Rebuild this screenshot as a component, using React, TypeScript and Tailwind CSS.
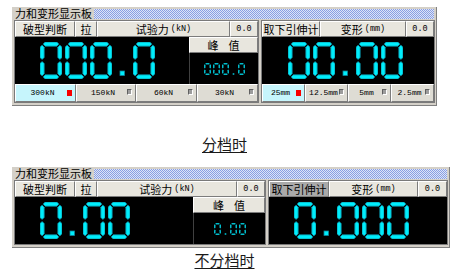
import React from 'react';

const SEG: Record<string, string> = {
  '0': 'abcdef',
  '1': 'bc',
  '2': 'abged',
  '3': 'abgcd',
  '4': 'fgbc',
  '5': 'afgcd',
  '6': 'afgedc',
  '7': 'abc',
  '8': 'abcdefg',
  '9': 'abcdfg',
};

type DigitProps = { ch: string; w: number; h: number; t: number; fill: string; edge?: string };

// one seven-segment cell, drawn with hexagon segments
function Digit({ ch, w, h, t, fill, edge }: DigitProps) {
  const k = t / 2;
  const g = t > 2 ? 1 : 0.5;
  const L = k;
  const R = w - k;
  const T = k;
  const M = h / 2;
  const B = h - k;
  const hz = (y: number) =>
    `${L + g},${y} ${L + g + k},${y - k} ${R - g - k},${y - k} ${R - g},${y} ${R - g - k},${y + k} ${L + g + k},${y + k}`;
  const vt = (x: number, y1: number, y2: number) =>
    `${x},${y1} ${x + k},${y1 + k} ${x + k},${y2 - k} ${x},${y2} ${x - k},${y2 - k} ${x - k},${y1 + k}`;
  const pts: Record<string, string> = {
    a: hz(T),
    g: hz(M),
    d: hz(B),
    f: vt(L, T + g, M - g),
    b: vt(R, T + g, M - g),
    e: vt(L, M + g, B - g),
    c: vt(R, M + g, B - g),
  };
  return (
    <svg width={w} height={h} viewBox={`0 0 ${w} ${h}`}>
      {(SEG[ch] || '').split('').map((s) => (
        <polygon key={s} points={pts[s]} fill={fill} stroke={edge || 'none'} strokeWidth={0.8} />
      ))}
    </svg>
  );
}

function BigReadout({ value }: { value: string }) {
  return (
    <div className="flex gap-[3px]">
      {value.split('').map((c, i) =>
        c === '.' ? (
          <svg key={i} width={15} height={37}>
            <rect x={5} y={29} width={4.5} height={4.5} fill="#00eefc" stroke="#0a8398" strokeWidth={0.8} />
          </svg>
        ) : (
          <Digit key={i} ch={c} w={22} h={37} t={4.2} fill="#00eefc" edge="#0a8398" />
        ),
      )}
    </div>
  );
}

function SmallReadout({ value }: { value: string }) {
  return (
    <div className="flex gap-[2px]">
      {value.split('').map((c, i) =>
        c === '.' ? (
          <svg key={i} width={5} height={12}>
            <rect x={1.7} y={10.2} width={1.6} height={1.6} fill="#00bccc" />
          </svg>
        ) : (
          <Digit key={i} ch={c} w={7} h={12} t={1.5} fill="#00bccc" />
        ),
      )}
    </div>
  );
}

const cjk = "font-['Noto_Sans_CJK_SC','Noto_Sans',sans-serif]";
const mono = "font-['Liberation_Mono',monospace]";
const raised = 'border-t border-l border-t-white border-l-white border-r border-b border-r-[#7c7c7c] border-b-[#7c7c7c]';

function HeadBtn({ className, children }: { className: string; children: React.ReactNode }) {
  return (
    <div className={`flex h-[16px] items-center justify-center text-black ${raised} ${className}`}>{children}</div>
  );
}

function Unit({ cn, unit }: { cn: string; unit: string }) {
  return (
    <>
      <span className={`${cjk} text-[11px] leading-[14px]`}>{cn}</span>
      <span className={`${mono} ml-[2px] text-[8.5px] leading-[14px]`}>{unit}</span>
    </>
  );
}

function Zero({ className }: { className: string }) {
  return (
    <HeadBtn className={`bg-[#e8e6de] ${className}`}>
      <span className={`${mono} text-[8.5px] leading-[14px]`}>0.0</span>
    </HeadBtn>
  );
}

function RangeBtn({ label, active, className }: { label: string; active?: boolean; className: string }) {
  return (
    <div
      className={`flex h-[18px] items-center ${raised} ${active ? 'bg-[#c6f5fc]' : 'bg-[#dedcd4]'} ${className}`}
    >
      <span className={`${mono} flex-1 pl-[2px] text-center text-[8px] leading-[10px] text-black`}>{label}</span>
      {active ? (
        <span className="mr-[3px] h-[6px] w-[5px] bg-[#f80000]" />
      ) : (
        <span className="mr-[3px] mb-[3px] h-[6px] w-[5px] border border-t-[#606060] border-l-[#606060] border-r-white border-b-white bg-[#9c9c9c]" />
      )}
    </div>
  );
}

function TitleBar() {
  return (
    <div className="flex h-[13px] items-center">
      <span className={`${cjk} pl-[1px] text-[11px] leading-[13px] text-black`}>力和变形显示板</span>
      <div className="ml-[2px] mr-[1px] h-[10px] flex-1 bg-[#b8c4f0] bg-[conic-gradient(#8a9fe2_25%,#dde4f8_0_50%,#8a9fe2_0_75%,#dde4f8_0)] bg-[length:2px_2px]" />
    </div>
  );
}

function PeakHead({ className }: { className: string }) {
  return (
    <HeadBtn className={`bg-[#e8e6de] ${className}`}>
      <span className={`${cjk} flex gap-[10px] text-[11px] leading-[14px]`}>
        <span>峰</span>
        <span>值</span>
      </span>
    </HeadBtn>
  );
}

function Caption({ text, className }: { text: string; className: string }) {
  return (
    <div className={`${cjk} w-[425px] text-center text-[15px] leading-[17px] text-[#1a1a1a] ${className}`}>
      <span className="underline underline-offset-[2px]">{text}</span>
    </div>
  );
}

function RangedPanel() {
  return (
    <div className="w-[425px] border-r border-b border-[#808080] bg-[#d4d0c8] pl-[2px] pr-[1px] pb-[2px]">
      <TitleBar />
      <div className="flex gap-[2px]">
        <div className="w-[245px] border border-[#7a7a7a]">
          <div className="flex">
            <HeadBtn className={`${cjk} w-[60px] bg-[#e8e6de] text-[11px] leading-[14px]`}>破型判断</HeadBtn>
            <HeadBtn className={`${cjk} w-[22px] bg-[#e8e6de] text-[11px] leading-[14px]`}>拉</HeadBtn>
            <HeadBtn className="w-[133px] bg-[#e8e6de]">
              <Unit cn="试验力" unit="(kN)" />
            </HeadBtn>
            <Zero className="w-[28px]" />
          </div>
          <div className="flex h-[47px]">
            <div className="w-[174px] bg-black pl-[25px] pt-[5px]">
              <BigReadout value="000.0" />
            </div>
            <div className="flex w-[69px] flex-col">
              <PeakHead className="w-[69px]" />
              <div className="flex flex-1 items-center justify-center border-l border-[#404040] bg-black">
                <SmallReadout value="000.0" />
              </div>
            </div>
          </div>
          <div className="flex">
            <RangeBtn label="300kN" active className="w-[61px]" />
            <RangeBtn label="150kN" className="w-[60px]" />
            <RangeBtn label="60kN" className="w-[61px]" />
            <RangeBtn label="30kN" className="w-[61px]" />
          </div>
        </div>
        <div className="w-[174px] border border-[#7a7a7a]">
          <div className="flex">
            <HeadBtn className={`${cjk} w-[58px] bg-[#e8e6de] text-[11px] leading-[14px]`}>取下引伸计</HeadBtn>
            <HeadBtn className="w-[86px] bg-[#e8e6de]">
              <Unit cn="变形" unit="(mm)" />
            </HeadBtn>
            <Zero className="w-[28px]" />
          </div>
          <div className="h-[47px] bg-black pl-[26px] pt-[5px]">
            <BigReadout value="00.00" />
          </div>
          <div className="flex">
            <RangeBtn label="25mm" active className="w-[43px]" />
            <RangeBtn label="12.5mm" className="w-[43px]" />
            <RangeBtn label="5mm" className="w-[43px]" />
            <RangeBtn label="2.5mm" className="w-[43px]" />
          </div>
        </div>
      </div>
    </div>
  );
}

function PlainPanel() {
  return (
    <div className="mt-[15px] w-[438px] border-r border-b border-[#808080] bg-[#d4d0c8] pl-[2px] pr-[1px] pb-[2px]">
      <TitleBar />
      <div className="flex gap-[2px]">
        <div className="w-[252px] border border-[#7a7a7a]">
          <div className="flex">
            <HeadBtn className={`${cjk} w-[60px] bg-[#e8e6de] text-[11px] leading-[14px]`}>破型判断</HeadBtn>
            <HeadBtn className={`${cjk} w-[22px] bg-[#e8e6de] text-[11px] leading-[14px]`}>拉</HeadBtn>
            <HeadBtn className="w-[140px] bg-[#e8e6de]">
              <Unit cn="试验力" unit="(kN)" />
            </HeadBtn>
            <Zero className="w-[28px]" />
          </div>
          <div className="flex h-[47px]">
            <div className="w-[178px] bg-black pl-[25px] pt-[5px]">
              <BigReadout value="0.00" />
            </div>
            <div className="flex w-[72px] flex-col">
              <PeakHead className="w-[72px]" />
              <div className="flex flex-1 items-center justify-center border-l border-[#404040] bg-black">
                <SmallReadout value="0.00" />
              </div>
            </div>
          </div>
        </div>
        <div className="w-[180px] border border-[#7a7a7a]">
          <div className="flex">
            <HeadBtn className={`${cjk} w-[60px] bg-[#a9a9a9] text-[11px] leading-[14px]`}>取下引伸计</HeadBtn>
            <HeadBtn className="w-[89px] bg-[#e8e6de]">
              <Unit cn="变形" unit="(mm)" />
            </HeadBtn>
            <Zero className="w-[29px]" />
          </div>
          <div className="h-[47px] bg-black pl-[25px] pt-[5px]">
            <BigReadout value="0.000" />
          </div>
        </div>
      </div>
    </div>
  );
}

export default function App() {
  return (
    <div className="h-[278px] w-[463px] overflow-hidden bg-white pl-[12px] pt-[7px]">
      <RangedPanel />
      <Caption text="分档时" className="mt-[29px]" />
      <PlainPanel />
      <Caption text="不分档时" className="mt-[3px]" />
    </div>
  );
}
